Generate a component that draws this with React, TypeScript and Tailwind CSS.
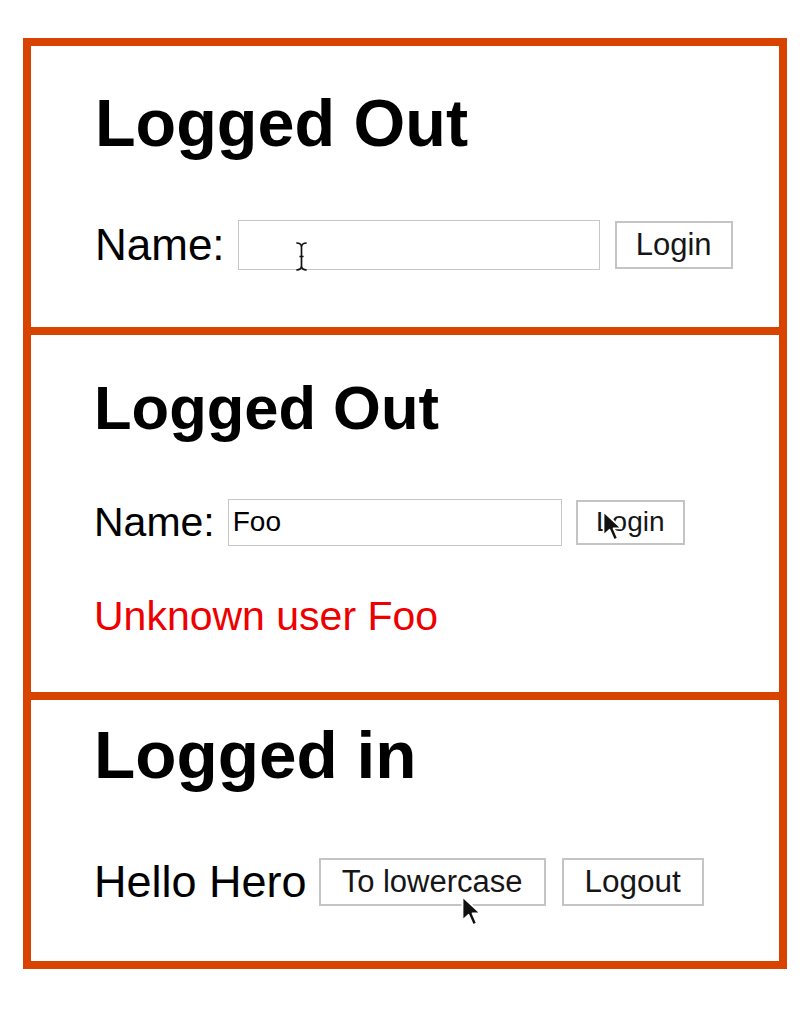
import React from "react";

const font = { fontFamily: '"Liberation Sans", Arial, Helvetica, sans-serif' };

function ArrowCursor({ className }: { className: string }) {
  return (
    <svg className={className} viewBox="0 0 14 22" width="21" height="33">
      <path d="M1 1 L1 17 L5 13.2 L8 20 L10.6 18.9 L7.7 12.2 L13 12.2 Z" fill="#111" stroke="#fff" strokeWidth="1.2" strokeLinejoin="round" />
    </svg>
  );
}

function IBeam({ className }: { className: string }) {
  return (
    <svg className={className} viewBox="0 0 12 28" width="13" height="29">
      <path d="M1 1 Q6 1 6 5 Q6 1 11 1 M6 5 L6 23 M1 27 Q6 27 6 23 Q6 27 11 27 M4 14 L8 14" fill="none" stroke="#111" strokeWidth="1.6" />
    </svg>
  );
}

function Btn({ label, className }: { label: string; className: string }) {
  return (
    <button className={`flex items-center justify-center bg-white border-2 border-[#c4c4c4] text-[#161616] leading-none ${className}`}>
      {label}
    </button>
  );
}

export default function App() {
  return (
    <div className="w-[803px] h-[1017px] bg-white pt-[38px] pl-[23px]" style={font}>
      <div className="w-[764px] border-[8px] border-[#d84400]">
        {/* first state: empty field */}
        <section className="relative h-[281px] pt-[44px] pl-[64px]">
          <h1 className="text-[66.5px] font-bold leading-none text-black">Logged Out</h1>
          <div className="mt-[63px] flex items-center">
            <span className="text-[44px] leading-none text-black">Name:</span>
            <div className="relative ml-[13px] w-[362px] h-[50px] border border-[#c6c6c6] bg-white">
              <IBeam className="absolute left-[56px] top-[21px]" />
            </div>
            <Btn label="Login" className="ml-[15px] w-[118px] h-[48px] text-[31px]" />
          </div>
        </section>

        {/* second state: unknown user */}
        <section className="h-[365px] border-t-[8px] border-[#d84400] pt-[42px] pl-[63px]">
          <h1 className="text-[61.5px] font-bold leading-none text-black">Logged Out</h1>
          <div className="mt-[60px] flex items-center">
            <span className="text-[41px] leading-none text-black">Name:</span>
            <div className="ml-[13px] w-[334px] h-[47px] border border-[#c6c6c6] bg-white flex items-center pl-[4px] text-[28px] leading-none text-black">
              Foo
            </div>
            <div className="relative ml-[14px]">
              <Btn label="Login" className="w-[109px] h-[45px] text-[28px]" />
              <ArrowCursor className="absolute left-[26px] top-[10px]" />
            </div>
          </div>
          <p className="mt-[50px] text-[41px] leading-none text-[#ee0000]">Unknown user Foo</p>
        </section>

        {/* third state: logged in */}
        <section className="h-[269px] border-t-[8px] border-[#d84400] pt-[21px] pl-[63px]">
          <h1 className="text-[67.5px] font-bold leading-none text-black">Logged in</h1>
          <div className="mt-[69px] flex items-center">
            <span className="text-[45px] leading-none text-black">Hello Hero</span>
            <div className="relative ml-[12px]">
              <Btn label="To lowercase" className="w-[227px] h-[48px] text-[31px]" />
              <ArrowCursor className="absolute left-[142px] top-[37px]" />
            </div>
            <Btn label="Logout" className="ml-[16px] w-[142px] h-[48px] text-[31.5px]" />
          </div>
        </section>
      </div>
    </div>
  );
}
